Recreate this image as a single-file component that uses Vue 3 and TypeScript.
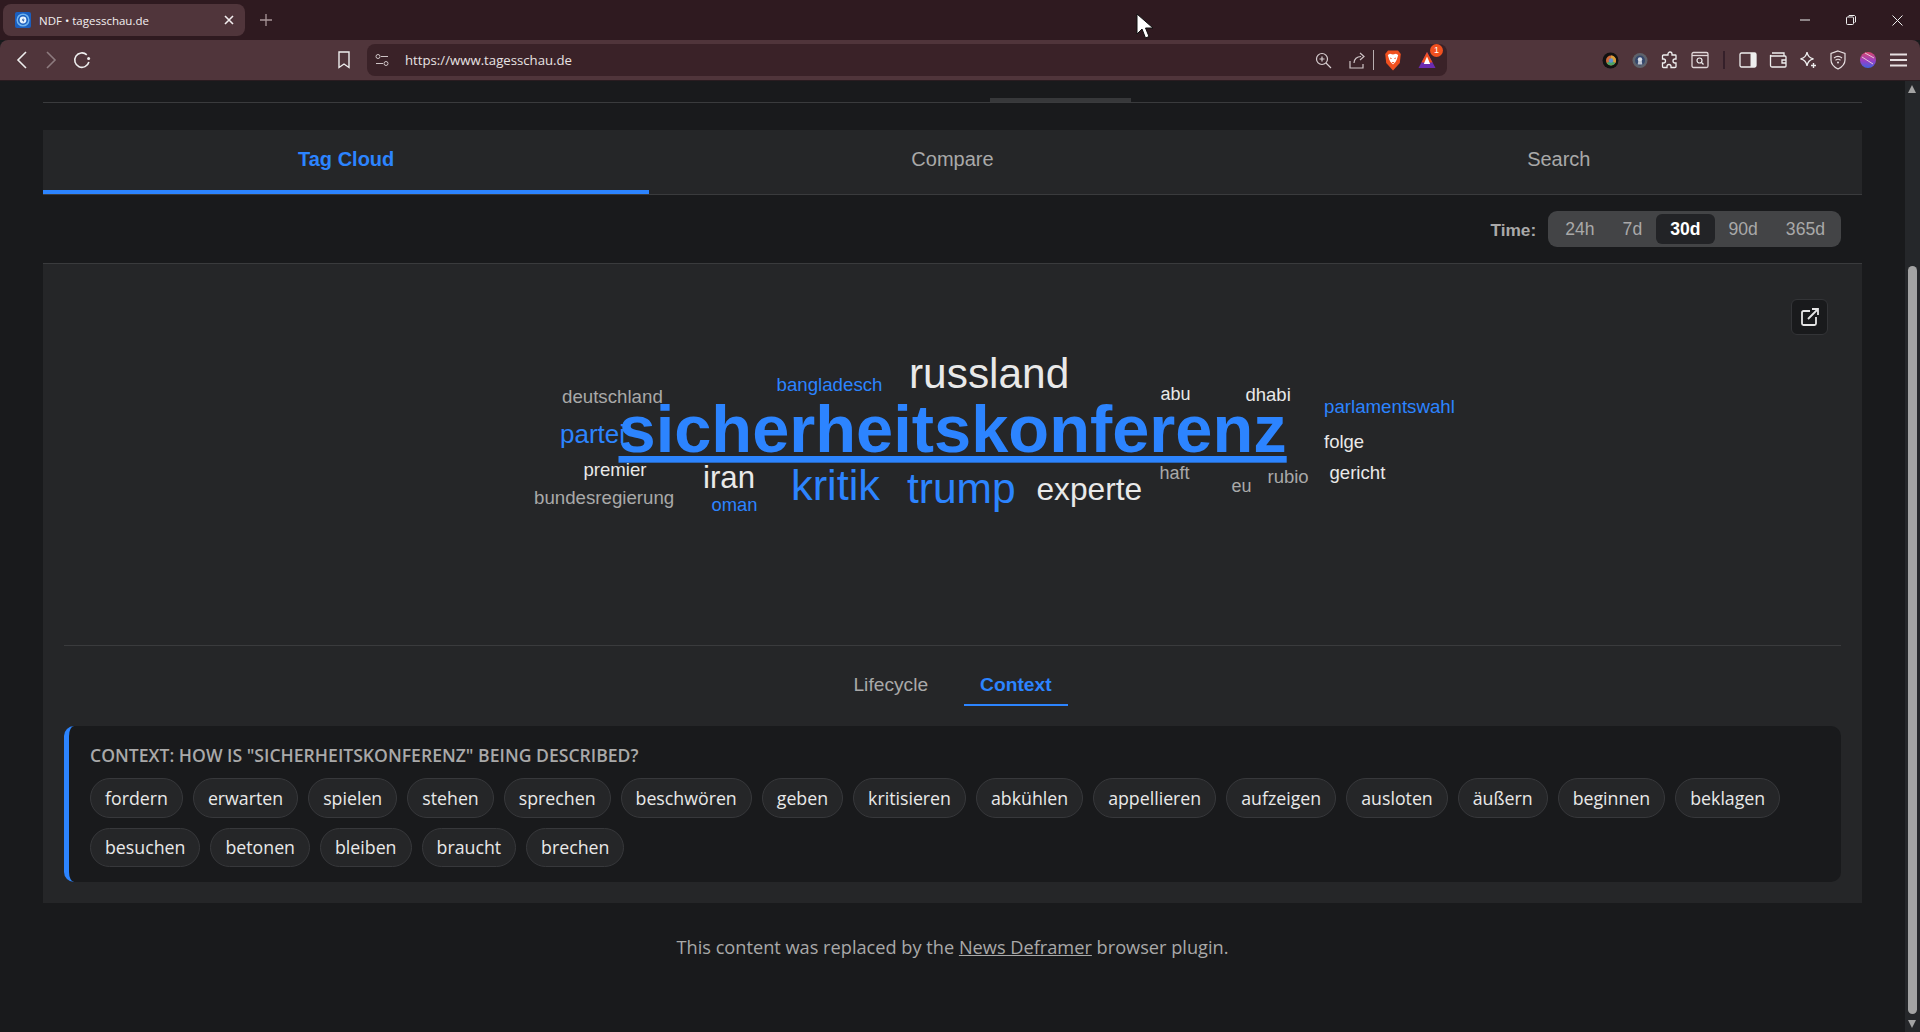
<template>
  <div class="window">
    <!-- tab strip -->
    <div class="tabstrip">
      <div class="browser-tab">
        <svg class="favicon" width="16" height="16" viewBox="0 0 16 16">
          <rect width="16" height="16" rx="2" fill="#1a5fc0" />
          <circle cx="8" cy="8" r="5.800" fill="none" stroke="#6fb2ee" stroke-width="1.500" />
          <circle cx="8" cy="8" r="3.400" fill="#e8f4ff" />
          <path d="M8.600 5.400 6.800 8.400h1.600l-.6 2.400 1.800-3.200H8z" fill="#123f8c" />
        </svg>
        <span class="tab-title">NDF • tagesschau.de</span>
        <svg class="tab-close" width="10" height="10" viewBox="0 0 10 10">
          <path d="M1 1l8 8M9 1 1 9" stroke="#f2eeef" stroke-width="1.600" fill="none" />
        </svg>
      </div>
      <svg class="new-tab" width="12" height="12" viewBox="0 0 12 12">
        <path d="M6 0v12M0 6h12" stroke="#a89598" stroke-width="1.300" fill="none" />
      </svg>
      <div class="win-controls">
        <svg width="10" height="10" viewBox="0 0 10 10"><path d="M0 5h10" stroke="#eee" fill="none" /></svg>
        <svg width="10" height="10" viewBox="0 0 10 10">
          <rect x=".5" y="2" width="7" height="7.500" rx="1" stroke="#eee" fill="none" />
          <path d="M2.500 1.500 3 .5h5.500l1 1V7l-1 .5" stroke="#eee" fill="none" />
        </svg>
        <svg width="11" height="11" viewBox="0 0 11 11"><path d="M.5.5l10 10M10.500.5l-10 10" stroke="#eee" fill="none" /></svg>
      </div>
    </div>

    <!-- toolbar -->
    <div class="toolbar">
      <div class="nav-buttons">
        <svg width="12" height="20" viewBox="0 0 12 20"><path d="M10 2 2 10l8 8" stroke="#eee" stroke-width="1.600" fill="none" /></svg>
        <svg width="12" height="20" viewBox="0 0 12 20"><path d="M2 2l8 8-8 8" stroke="#8d7b7f" stroke-width="1.600" fill="none" /></svg>
        <svg width="18" height="18" viewBox="0 0 18 18">
          <path d="M13.800 3.800A7.200 7.200 0 1 0 15.900 11" stroke="#eee" stroke-width="1.600" fill="none" />
          <circle cx="15.600" cy="7.600" r="1.500" fill="#eee" />
        </svg>
      </div>
      <svg class="bookmark" width="14" height="18" viewBox="0 0 14 18">
        <path d="M2 1h10v15.500l-5-3.500-5 3.500z" stroke="#eee" stroke-width="1.400" fill="none" />
      </svg>
      <div class="urlbar">
        <svg width="14" height="14" viewBox="0 0 14 14">
          <circle cx="3" cy="3.500" r="2" stroke="#cdc3c5" fill="none" />
          <circle cx="11" cy="10.500" r="2" stroke="#cdc3c5" fill="none" />
          <path d="M6 3.500h7M1 10.500h7" stroke="#cdc3c5" fill="none" />
        </svg>
        <span class="url">https://www.tagesschau.de</span>
        <div class="url-actions">
          <svg width="17" height="17" viewBox="0 0 17 17">
            <circle cx="7" cy="7" r="5.500" stroke="#d8cfd1" stroke-width="1.200" fill="none" />
            <path d="M7 4.500v5M4.500 7h5M11 11l5 5" stroke="#d8cfd1" stroke-width="1.200" fill="none" />
          </svg>
          <svg class="share" width="17" height="17" viewBox="0 0 17 17">
            <path d="M1 9v7h13v-4M5 11c0-4 3-6.500 7-6.500M11 1l4 3.500L11 8" stroke="#cfc5c7" stroke-width="1.200" fill="none" />
          </svg>
          <span class="url-sep"></span>
          <svg width="16" height="21" viewBox="0 0 16 21">
            <path d="M3 .5h10L15.800 4l-1 9L8 20.500 1.200 13l-1-9z" fill="#f0501f" />
            <path d="M2.800 5 5 3.800l3 .8 3-.8L13.200 5l-1.400 4.500-1.300 2.500L8 14.500 5.500 12 4.200 9.500z" fill="#fff" />
            <path d="M4.800 7.500 7 8.300 5.800 9.200zM11.200 7.500 9 8.300l1.200.9zM6.600 12h2.800L8 13.500z" fill="#f0501f" />
          </svg>
          <div class="aero">
            <svg width="18" height="18" viewBox="0 0 18 18">
              <path d="M9 1 17.500 17H.5z" fill="#6a2bb0" />
              <path d="M9 1 14.500 11.500h-11z" fill="#f0501f" />
              <path d="M9 5.500 12.200 13H5.800z" fill="#fff" />
            </svg>
            <span class="aero-badge">1</span>
          </div>
        </div>
      </div>
      <div class="ext-icons">
        <svg width="17" height="17" viewBox="0 0 17 17">
          <circle cx="8.500" cy="8.500" r="8" fill="#111" />
          <circle cx="9" cy="8.500" r="5" fill="#cf6b3a" />
          <path d="M9 3.500a5 5 0 0 1 4.300 7.500L9 8.500z" fill="#d9a13a" />
          <path d="M4.700 11a5 5 0 0 0 8.600 0L9 8.500z" fill="#4aa564" />
          <circle cx="9" cy="8.500" r="2.200" fill="#5f8fd0" />
        </svg>
        <svg width="16" height="17" viewBox="0 0 16 17">
          <circle cx="8" cy="8.500" r="7.500" fill="#5e626b" />
          <circle cx="8" cy="8.500" r="5" fill="#35476c" />
          <circle cx="8" cy="7.500" r="2.200" fill="#d8dde6" />
          <path d="M6.300 9h3.400l.6 3.500H5.700z" fill="#c2c8d4" />
        </svg>
        <svg width="18" height="18" viewBox="0 0 18 18">
          <path d="M7 3a2 2 0 0 1 4 0v1h3.500a.5.500 0 0 1 .5.500V8h-1a2 2 0 0 0 0 4h1v3.500a1 1 0 0 1-1 1H10v-1a2 2 0 0 0-4 0v1H2.500a1 1 0 0 1-1-1V12h1a2 2 0 0 0 0-4h-1V5a1 1 0 0 1 1-1H7z" stroke="#eee" stroke-width="1.300" fill="none" />
        </svg>
        <svg width="18" height="18" viewBox="0 0 18 18">
          <rect x="1" y="1.500" width="16" height="15" rx="1.500" stroke="#e0d6d8" stroke-width="1.300" fill="none" />
          <path d="M1 4.500h16" stroke="#e0d6d8" stroke-width="1.300" />
          <circle cx="8.500" cy="9.500" r="2.500" stroke="#eee" stroke-width="1.200" fill="none" />
          <path d="M10.500 11.500l2 2" stroke="#eee" stroke-width="1.200" />
        </svg>
        <span class="ext-sep"></span>
        <svg width="18" height="16" viewBox="0 0 18 16">
          <rect x="1" y="1" width="16" height="14" rx="1.500" stroke="#eee" stroke-width="1.300" fill="none" />
          <rect x="11.500" y="1" width="5.500" height="14" fill="#eee" />
        </svg>
        <svg width="18" height="16" viewBox="0 0 18 16">
          <path d="M3 1h12v3M1.500 3v10.500A1.500 1.500 0 0 0 3 15h13a1 1 0 0 0 1-1V5a1 1 0 0 0-1-1H3a1.500 1.500 0 0 1-1.500-1z" stroke="#eee" stroke-width="1.300" fill="none" />
          <path d="M17 8h-4v3h4" stroke="#eee" stroke-width="1.300" fill="none" />
        </svg>
        <svg width="18" height="18" viewBox="0 0 18 18">
          <path d="M8 1c.6 4 2.500 6 6.500 6.800C10.500 8.600 8.600 10.500 8 15c-.6-4.500-2.500-6.400-6.500-7.200C5.500 7 7.400 5 8 1z" stroke="#eee" stroke-width="1.300" fill="none" />
          <path d="M14.500 12v5M12 14.500h5" stroke="#eee" stroke-width="1.400" />
        </svg>
        <svg width="16" height="20" viewBox="0 0 16 20">
          <path d="M8 1l7 2.500V10c0 4-3 7-7 9-4-2-7-5-7-9V3.500z" stroke="#e8e0e2" stroke-width="1.200" fill="none" />
          <path d="M4 8c2.500-2 5.500-2 8 0M5.500 10.200c1.600-1.200 3.400-1.200 5 0" stroke="#e8e0e2" stroke-width="1.100" fill="none" />
          <circle cx="8" cy="12.500" r="1" fill="#e8e0e2" />
        </svg>
        <svg width="16" height="18" viewBox="0 0 16 18">
          <defs>
            <linearGradient id="ball" x1="0" y1="0" x2="0" y2="1">
              <stop offset="0" stop-color="#d9486b" />
              <stop offset=".55" stop-color="#9a3fc4" />
              <stop offset="1" stop-color="#3f62e0" />
            </linearGradient>
          </defs>
          <circle cx="8" cy="9" r="8" fill="url(#ball)" />
          <path d="M2 6l11 7M5 2l9 5" stroke="#e7c7d8" fill="none" />
        </svg>
        <svg width="17" height="14" viewBox="0 0 17 14">
          <path d="M0 1.500h17M0 7h17M0 12.500h17" stroke="#e8e0e2" stroke-width="1.800" />
        </svg>
      </div>
    </div>

    <!-- page -->
    <div class="viewport">
      <div class="page">
        <div class="top-rule"><span class="top-thumb"></span></div>

        <nav class="main-tabs">
          <button v-for="t in mainTabs" :key="t" class="main-tab" :class="{ active: t === 'Tag Cloud' }">{{ t }}</button>
        </nav>

        <div class="time-row">
          <span class="time-label">Time:</span>
          <div class="segments">
            <button v-for="r in ranges" :key="r" class="segment" :class="{ active: r === '30d' }">{{ r }}</button>
          </div>
        </div>

        <section class="panel">
          <div class="cloud">
            <button class="open-btn" aria-label="Open in new window">
              <svg width="20" height="20" viewBox="0 0 20 20">
                <path d="M10 4H3.500A1.500 1.500 0 0 0 2 5.500v11A1.500 1.500 0 0 0 3.500 18h11a1.500 1.500 0 0 0 1.500-1.500V10M8 12 18 2M12 2h6v6" stroke="#e6e6e6" stroke-width="1.800" fill="none" />
              </svg>
            </button>
            <svg class="cloud-svg" width="1777" height="381" viewBox="64 264 1777 381">
              <text
                v-for="w in words"
                :key="w.text"
                :x="w.x"
                :y="w.y"
                :font-size="w.size"
                :font-weight="w.bold ? 700 : 400"
                :fill="w.color"
                :text-decoration="w.bold ? 'underline' : 'none'"
              >{{ w.text }}</text>
            </svg>
          </div>

          <div class="sub-tabs">
            <button class="sub-tab">Lifecycle</button>
            <button class="sub-tab active">Context</button>
          </div>

          <div class="context-box">
            <h4 class="context-title">Context: How is "sicherheitskonferenz" being described?</h4>
            <div class="chips">
              <span v-for="c in chips" :key="c" class="chip">{{ c }}</span>
            </div>
          </div>
        </section>

        <p class="footer-note">
          This content was replaced by the <a class="footer-link">News Deframer</a> browser plugin.
        </p>
      </div>

      <div class="scrollbar">
        <span class="arrow-up"></span>
        <span class="scroll-thumb"></span>
        <span class="arrow-down"></span>
      </div>
    </div>

    <svg class="cursor" width="18" height="27" viewBox="0 0 18 27">
      <path d="M1 1v20l5-5 3.500 9 3.500-1.500L9.500 15H17z" fill="#fff" stroke="#111" stroke-width="1" />
    </svg>
  </div>
</template>

<script setup lang="ts">
interface Word {
  text: string
  x: number
  y: number
  size: number
  color: string
  bold?: boolean
}

const BLUE = '#2c84ff'
const WHITE = '#e9e9e9'
const GRAY = '#a9a9a9'

const mainTabs = ['Tag Cloud', 'Compare', 'Search']
const ranges = ['24h', '7d', '30d', '90d', '365d']

const words: Word[] = [
  { text: 'deutschland', x: 562, y: 403, size: 18.7, color: GRAY },
  { text: 'bangladesch', x: 776.5, y: 391, size: 18.7, color: BLUE },
  { text: 'russland', x: 909, y: 388, size: 42.4, color: WHITE },
  { text: 'partei', x: 560, y: 443, size: 26, color: BLUE },
  { text: 'sicherheitskonferenz', x: 618.5, y: 452, size: 66.8, color: BLUE, bold: true },
  { text: 'premier', x: 583.5, y: 476, size: 18.6, color: WHITE },
  { text: 'iran', x: 703, y: 488, size: 31.2, color: WHITE },
  { text: 'bundesregierung', x: 534, y: 504, size: 18.7, color: GRAY },
  { text: 'oman', x: 711.5, y: 511, size: 18.4, color: BLUE },
  { text: 'kritik', x: 791, y: 500, size: 43.3, color: BLUE },
  { text: 'trump', x: 907, y: 503, size: 42.5, color: BLUE },
  { text: 'experte', x: 1036.5, y: 500, size: 31.7, color: WHITE },
  { text: 'abu', x: 1160.5, y: 400, size: 18, color: WHITE },
  { text: 'dhabi', x: 1245.5, y: 401, size: 18.5, color: WHITE },
  { text: 'parlamentswahl', x: 1324, y: 413, size: 18.7, color: BLUE },
  { text: 'folge', x: 1324, y: 448, size: 18.5, color: WHITE },
  { text: 'haft', x: 1159.5, y: 479, size: 18, color: GRAY },
  { text: 'eu', x: 1231.5, y: 492, size: 18, color: GRAY },
  { text: 'rubio', x: 1267.5, y: 483, size: 18.5, color: GRAY },
  { text: 'gericht', x: 1329.5, y: 479, size: 18.6, color: WHITE }
]

const chips = [
  'fordern', 'erwarten', 'spielen', 'stehen', 'sprechen', 'beschwören', 'geben', 'kritisieren',
  'abkühlen', 'appellieren', 'aufzeigen', 'ausloten', 'äußern', 'beginnen', 'beklagen',
  'besuchen', 'betonen', 'bleiben', 'braucht', 'brechen'
]
</script>

<style>
html,
body {
  margin: 0;
  background: #191a1c;
  overflow: hidden;
}
</style>

<style scoped>
.window {
  position: relative;
  display: flex;
  flex-direction: column;
  width: 1920px;
  height: 1032px;
  overflow: hidden;
  background: #191a1c;
  font-family: "Liberation Sans", Arial, sans-serif;
}

/* browser chrome */
.tabstrip {
  display: flex;
  align-items: center;
  flex: none;
  height: 40px;
  background: #2f1a20;
}

.browser-tab {
  display: flex;
  align-items: center;
  width: 242px;
  height: 32px;
  margin-left: 3px;
  padding: 0 11px 0 12px;
  box-sizing: border-box;
  border-radius: 8px;
  background: #50353b;
}

.tab-title {
  margin-left: 8px;
  font-family: "Open Sans", sans-serif;
  font-size: 11.500px;
  color: #f3eff0;
  white-space: nowrap;
}

.tab-close {
  margin-left: auto;
}

.new-tab {
  margin-left: 15px;
}

.win-controls {
  display: flex;
  align-items: center;
  gap: 36px;
  margin-left: auto;
  margin-right: 17px;
}

.toolbar {
  display: flex;
  align-items: center;
  flex: none;
  height: 40px;
  border-radius: 8px 8px 0 0;
  border-bottom: 1px solid #2a1c20;
  background: #50353b;
}

.nav-buttons {
  display: flex;
  align-items: center;
  gap: 16.500px;
  margin-left: 16px;
}

.bookmark {
  margin-left: 246px;
}

.urlbar {
  display: flex;
  align-items: center;
  width: 1080px;
  height: 32px;
  margin-left: 16px;
  padding: 0 8px;
  box-sizing: border-box;
  border-radius: 8px;
  background: #3a2228;
}

.url {
  margin-left: 16px;
  font-family: "Open Sans", sans-serif;
  font-size: 13.200px;
  color: #e8e2e3;
}

.url-actions {
  display: flex;
  align-items: center;
  margin-left: auto;
}

.share {
  margin-left: 17px;
}

.url-sep {
  width: 1px;
  height: 20px;
  margin: 0 11px 0 7px;
  background: #b9aeb0;
}

.aero {
  position: relative;
  display: flex;
  margin: 0 3px 0 17px;
}

.aero-badge {
  position: absolute;
  top: -7px;
  right: -7px;
  width: 13px;
  height: 13px;
  border-radius: 50%;
  background: #f0501f;
  color: #fff;
  font-size: 9px;
  line-height: 13px;
  text-align: center;
}

.ext-icons {
  display: grid;
  grid-template-columns: repeat(4, 30px) 18px repeat(6, 30px);
  align-items: center;
  justify-items: center;
  margin-left: 148px;
}

.ext-sep {
  width: 2px;
  height: 18px;
  background: #35202a;
}

/* page */
.viewport {
  display: flex;
  flex: 1;
  min-height: 0;
}

.page {
  flex: 1;
  min-width: 0;
  padding: 0 43px;
}

.top-rule {
  display: flex;
  align-items: flex-end;
  height: 21px;
  border-bottom: 1px solid #3a3b3d;
}

.top-thumb {
  width: 141px;
  height: 4px;
  margin-left: 947px;
  background: #37383a;
}

.main-tabs {
  display: flex;
  margin-top: 27px;
  border-bottom: 1px solid #3a3b3d;
  background: #252628;
}

.main-tab {
  flex: 1;
  height: 58px;
  padding: 0 0 6px;
  box-sizing: content-box;
  border: 0;
  background: none;
  font-family: inherit;
  font-size: 20px;
  color: #a9a9a9;
}

.main-tab.active {
  padding-bottom: 2px;
  border-bottom: 4px solid #2c84ff;
  font-weight: 700;
  color: #2c84ff;
}

.time-row {
  display: flex;
  align-items: center;
  justify-content: flex-end;
  gap: 12px;
  height: 68px;
  padding-right: 21px;
  border-bottom: 1px solid #3a3b3d;
}

.time-label {
  padding-top: 2px;
  font-size: 17.300px;
  font-weight: 700;
  color: #a9a9a9;
}

.segments {
  display: flex;
  padding: 3px 2px 3px 3px;
  border-radius: 9px;
  background: #434446;
}

.segment {
  height: 30px;
  padding: 0 14px;
  border: 0;
  border-radius: 6px;
  background: none;
  font-family: inherit;
  font-size: 17.600px;
  color: #a9a9a9;
}

.segment.active {
  background: #222326;
  font-weight: 700;
  color: #fff;
}

.panel {
  padding: 0 21px 21px;
  background: #252628;
}

.cloud {
  position: relative;
  border-bottom: 1px solid #3a3b3d;
}

.cloud-svg {
  display: block;
  font-family: "Liberation Sans", Arial, sans-serif;
}

.open-btn {
  position: absolute;
  top: 35px;
  right: 13px;
  display: flex;
  align-items: center;
  justify-content: center;
  width: 37px;
  height: 36px;
  padding: 0;
  border: 1px solid #333437;
  border-radius: 6px;
  background: #191a1c;
}

.sub-tabs {
  display: flex;
  justify-content: center;
  gap: 20px;
  margin-top: 12px;
  margin-bottom: 20px;
}

.sub-tab {
  padding: 16px 16px 8px;
  border: 0;
  border-bottom: 2px solid transparent;
  background: none;
  font-family: inherit;
  font-size: 19.200px;
  line-height: 22px;
  color: #a9a9a9;
}

.sub-tab.active {
  border-bottom-color: #2c84ff;
  font-weight: 700;
  color: #2c84ff;
}

.context-box {
  padding: 17px 21px 15px;
  border-left: 5px solid #2c84ff;
  border-radius: 10px;
  background: #191a1c;
  font-family: "Open Sans", sans-serif;
}

.context-title {
  margin: 0 0 11px;
  font-size: 17.600px;
  font-weight: 600;
  line-height: 24px;
  text-transform: uppercase;
  color: #a9a9a9;
}

.chips {
  display: flex;
  flex-wrap: wrap;
  gap: 10px;
}

.chip {
  padding: .5px 14px 0;
  border: 1px solid #37383b;
  border-radius: 20px;
  background: #252628;
  font-size: 17.760px;
  line-height: 37px;
  color: #e9e9e9;
}

.footer-note {
  margin: 0;
  padding-top: 31px;
  font-family: "Open Sans", sans-serif;
  font-size: 18.200px;
  line-height: 26px;
  text-align: center;
  color: #a9a9a9;
}

.footer-link {
  text-decoration: underline;
}

.scrollbar {
  position: relative;
  flex: none;
  width: 15px;
  background: #25272a;
}

.scroll-thumb {
  position: absolute;
  top: 185px;
  left: 3px;
  width: 9px;
  height: 748px;
  border-radius: 5px;
  background: #a3a3a3;
}

.arrow-up,
.arrow-down {
  position: absolute;
  left: 3px;
  width: 0;
  height: 0;
  border-left: 4.500px solid transparent;
  border-right: 4.500px solid transparent;
}

.arrow-up {
  top: 4px;
  border-bottom: 8px solid #a3a3a3;
}

.arrow-down {
  bottom: 4px;
  border-top: 8px solid #a3a3a3;
}

.cursor {
  position: absolute;
  top: 13px;
  left: 1136px;
}
</style>
